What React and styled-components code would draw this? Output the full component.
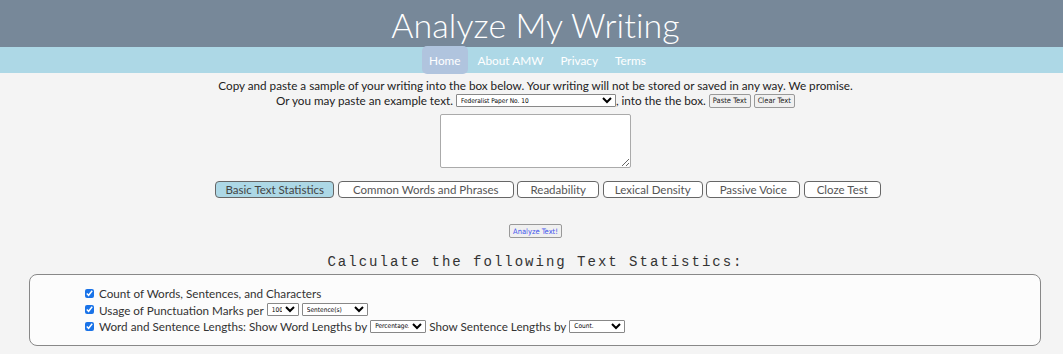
import React from "react";
import styled, { createGlobalStyle } from "styled-components";

const Global = createGlobalStyle`
  html, body { margin: 0; padding: 0; background: #f4f4f4; }
  body { font-family: "Lato", "Liberation Sans", sans-serif; color: #222; }
`;

const Header = styled.header`
  background: #778899;
  height: 47px;
  display: flex;
  align-items: center;
  justify-content: center;
  padding-left: 8px;
`;
const Title = styled.h1`
  margin: 0;
  color: #fff;
  font-weight: 300;
  font-size: 34px;
  letter-spacing: 0.1px;
  padding-top: 2px;
`;
const Nav = styled.nav`
  background: #add8e6;
  height: 26px;
  display: flex;
  justify-content: center;
  align-items: stretch;
  gap: 3px;
  padding-left: 12px;
`;
const NavItem = styled.a`
  color: #fff;
  font-size: 11.8px;
  padding: 0 7px;
  display: flex;
  align-items: center;
  text-decoration: none;
  background: ${(p) => (p.$active ? "#b0c4de" : "transparent")};
  border-radius: 5px;
  ${(p) => p.$active && "margin-top:-1px; margin-bottom:-1px;"}
`;
const Main = styled.main`
  display: flex;
  flex-direction: column;
  align-items: center;
  padding-left: 8px;
`;
const Intro = styled.div`
  margin-top: 5px;
  text-align: center;
  font-size: 11.7px;
  line-height: 15px;
`;
const Line = styled.div`
  display: flex;
  justify-content: center;
  align-items: center;
  gap: 3px;
`;
const SmallSelect = styled.select`
  font-family: "DejaVu Sans Condensed", "Liberation Sans", sans-serif;
  font-size: 6.5px;
  height: 13px;
  width: ${(p) => p.$w}px;
  padding: 0;
  border: 1px solid #888;
  border-radius: 1px;
  background: #fff;
  color: #000;
`;
const SmallButton = styled.button`
  font-family: "DejaVu Sans Condensed", "Liberation Sans", sans-serif;
  font-size: 7.5px;
  height: 14px;
  padding: 0 3px;
  border: 1px solid #999;
  border-radius: 2px;
  background: #f0f0f0;
  color: ${(p) => p.$color || "#222"};
`;
const TextArea = styled.textarea`
  margin-top: 6px;
  width: 187px;
  height: 50px;
  border: 1px solid #aaa;
  border-radius: 2px;
  background: #fff;
  padding: 1px;
`;
const Tabs = styled.div`
  margin-top: 13px;
  display: flex;
  gap: 3.5px;
  margin-left: 25px;
`;
const Tab = styled.button`
  font-family: "Lato", "Liberation Sans", sans-serif;
  font-size: 11.5px;
  white-space: nowrap;
  height: 17px;
  padding: 0;
  border: 1px solid #666;
  border-radius: 4px;
  background: ${(p) => (p.$active ? "#add8e6" : "#fff")};
  color: ${(p) => (p.$active ? "#444" : "#555")};
  width: ${(p) => p.$w}px;
`;
const AnalyzeRow = styled.div`
  margin-top: 25px;
  height: 16px;
  display: flex;
  align-items: center;
`;
const Heading = styled.h2`
  margin: 15px 0 0 0;
  font-family: "Liberation Mono", "DejaVu Sans Mono", monospace;
  font-size: 14px;
  font-weight: normal;
  letter-spacing: 2px;
  color: #333;
  line-height: 16px;
`;
const Box = styled.section`
  margin: 4px 22px 0 21px;
  align-self: stretch;
  border: 1px solid #888;
  border-radius: 8px;
  background: #fcfcfc;
  height: 72px;
  padding: 10px 0 0 55px;
  box-sizing: border-box;
`;
const Option = styled.label`
  display: flex;
  align-items: center;
  gap: 3px;
  font-size: 11.7px;
  height: 16.5px;
  color: #333;
`;
const Check = styled.input`
  margin: 0 2px 0 0;
  width: 9px;
  height: 9px;
  accent-color: #1a73e8;
`;

export default function App() {
  return (
    <>
      <Global />
      <Header>
        <Title>Analyze My Writing</Title>
      </Header>
      <Nav>
        <NavItem $active>Home</NavItem>
        <NavItem>About AMW</NavItem>
        <NavItem>Privacy</NavItem>
        <NavItem>Terms</NavItem>
      </Nav>
      <Main>
        <Intro>
          <div>Copy and paste a sample of your writing into the box below. Your writing will not be stored or saved in any way. We promise.</div>
          <Line>
            <span>Or you may paste an example text.</span>
            <SmallSelect $w={160}><option>Federalist Paper No. 10</option></SmallSelect>
            <span style={{ marginLeft: -3 }}>, into the the box.</span>
            <SmallButton>Paste Text</SmallButton>
            <SmallButton>Clear Text</SmallButton>
          </Line>
        </Intro>
        <TextArea />
        <Tabs>
          <Tab $active $w={119}>Basic Text Statistics</Tab>
          <Tab $w={176}>Common Words and Phrases</Tab>
          <Tab $w={82}>Readability</Tab>
          <Tab $w={100}>Lexical Density</Tab>
          <Tab $w={94}>Passive Voice</Tab>
          <Tab $w={77}>Cloze Test</Tab>
        </Tabs>
        <AnalyzeRow>
          <SmallButton $color="#4455ee">Analyze Text!</SmallButton>
        </AnalyzeRow>
        <Heading>Calculate the following Text Statistics:</Heading>
        <Box>
          <Option><Check type="checkbox" defaultChecked />Count of Words, Sentences, and Characters</Option>
          <Option>
            <Check type="checkbox" defaultChecked />Usage of Punctuation Marks per
            <SmallSelect $w={32}><option>100</option></SmallSelect>
            <SmallSelect $w={66}><option>Sentence(s)</option></SmallSelect>
          </Option>
          <Option>
            <Check type="checkbox" defaultChecked />Word and Sentence Lengths: Show Word Lengths by
            <SmallSelect $w={56}><option>Percentage.</option></SmallSelect>
            Show Sentence Lengths by
            <SmallSelect $w={56}><option>Count.</option></SmallSelect>
          </Option>
        </Box>
      </Main>
    </>
  );
}
